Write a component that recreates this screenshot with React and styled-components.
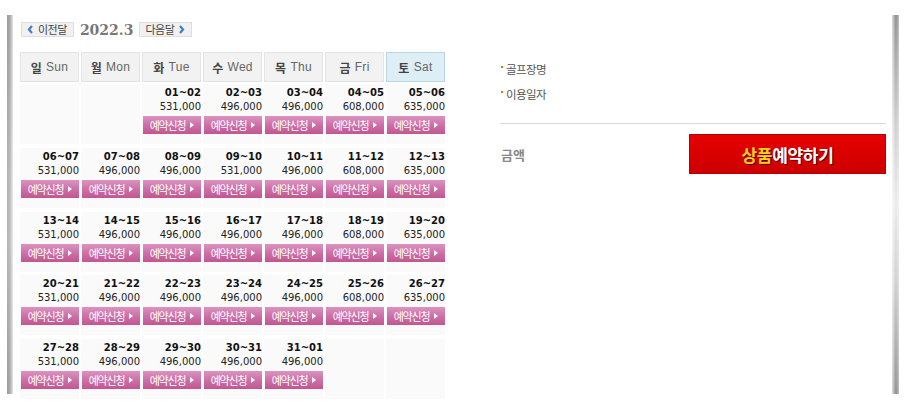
import React from 'react'
import styled, { createGlobalStyle } from 'styled-components'

const GlobalStyle = createGlobalStyle`
  html, body { margin: 0; padding: 0; background: #fff; }
  body { font-family: "DejaVu Sans", "Noto Sans CJK KR", sans-serif; }
`

const weeks = [
  [null, null, ['01~02', '531,000'], ['02~03', '496,000'], ['03~04', '496,000'], ['04~05', '608,000'], ['05~06', '635,000']],
  [['06~07', '531,000'], ['07~08', '496,000'], ['08~09', '496,000'], ['09~10', '531,000'], ['10~11', '496,000'], ['11~12', '608,000'], ['12~13', '635,000']],
  [['13~14', '531,000'], ['14~15', '496,000'], ['15~16', '496,000'], ['16~17', '496,000'], ['17~18', '496,000'], ['18~19', '608,000'], ['19~20', '635,000']],
  [['20~21', '531,000'], ['21~22', '496,000'], ['22~23', '496,000'], ['23~24', '496,000'], ['24~25', '496,000'], ['25~26', '608,000'], ['26~27', '635,000']],
  [['27~28', '531,000'], ['28~29', '496,000'], ['29~30', '496,000'], ['30~31', '496,000'], ['31~01', '496,000'], null, null],
]

const days = [['일', 'Sun'], ['월', 'Mon'], ['화', 'Tue'], ['수', 'Wed'], ['목', 'Thu'], ['금', 'Fri'], ['토', 'Sat']]

function Chevron({ dir }) {
  return (
    <svg width="7" height="9" viewBox="0 0 7 9">
      <polyline
        points={dir === 'left' ? '5,1 2,4.5 5,8' : '2,1 5,4.5 2,8'}
        fill="none" stroke="#3f7fc4" strokeWidth="2.2" />
    </svg>
  )
}

export default function App() {
  return (
    <Page>
      <GlobalStyle />
      <Frame>
        <Calendar>
          <MonthNav>
            <NavBtn><Chevron dir="left" />이전달</NavBtn>
            <Month>2022.3</Month>
            <NavBtn>다음달<Chevron dir="right" /></NavBtn>
          </MonthNav>
          <WeekHead>
            {days.map(([ko, en], i) => (
              <HeadCell key={en} $sat={i === 6}><b>{ko}</b> {en}</HeadCell>
            ))}
          </WeekHead>
          <Days>
            {weeks.flat().map((d, i) => (
              <DayCell key={i}>
                {d && <>
                  <DateText>{d[0]}</DateText>
                  <Price>{d[1]}</Price>
                  <ReserveBtn>예약신청</ReserveBtn>
                </>}
              </DayCell>
            ))}
          </Days>
        </Calendar>
        <Side>
          <InfoItem>골프장명</InfoItem>
          <InfoItem>이용일자</InfoItem>
          <Divider />
          <TotalRow>
            <TotalLabel>금액</TotalLabel>
            <BookBtn><em>상품</em>예약하기</BookBtn>
          </TotalRow>
        </Side>
      </Frame>
    </Page>
  )
}

const Page = styled.div`
  padding: 15px 0 0 13px;
  width: 906px;
  height: 410px;
  box-sizing: border-box;
`

const Frame = styled.div`
  position: relative;
  width: 879px;
  height: 379px;
  box-sizing: border-box;
  padding: 7px 6px 0 7px;
  display: flex;
  background: #fff;

  &::before, &::after {
    content: '';
    position: absolute;
    top: 0;
    bottom: 0;
  }
  &::before {
    left: -6px;
    width: 6px;
    background:
      linear-gradient(to right, rgba(255,255,255,0) 0%, rgba(255,255,255,0.15) 50%, rgba(255,255,255,0.75) 100%),
      linear-gradient(to bottom, #9a9a9a 0%, #b0b0b0 40%, #b4b4b4 60%, #9a9a9a 100%);
  }
  &::after {
    right: -7px;
    width: 7px;
    background:
      linear-gradient(to right, rgba(255,255,255,0.7) 0%, rgba(255,255,255,0) 55%, rgba(255,255,255,0.4) 100%),
      linear-gradient(to bottom, #8e8e8e 0%, #cfcfcf 30%, #ebebeb 50%, #cfcfcf 70%, #8e8e8e 100%);
  }
`

const Calendar = styled.div`
  width: 425px;
  display: flex;
  flex-direction: column;

  & > * {
    flex-shrink: 0;
  }
`

const MonthNav = styled.div`
  display: flex;
  align-items: center;
  gap: 6px;
  height: 15px;
  margin-left: 1px;
`

const NavBtn = styled.span`
  display: inline-flex;
  align-items: center;
  gap: 4px;
  height: 15px;
  padding: 0 6px 0 5px;
  box-sizing: border-box;
  background: #f1f1f1;
  border: 1px solid #dedede;
  font-family: "Noto Sans CJK KR", sans-serif;
  font-size: 11px;
  letter-spacing: -0.5px;
  color: #444;
  line-height: 1;
`

const Month = styled.span`
  font-family: "DejaVu Serif", serif;
  font-weight: bold;
  font-size: 14px;
  color: #777;
  padding-top: 1px;
`

const WeekHead = styled.div`
  margin-top: 15px;
  display: grid;
  grid-template-columns: repeat(7, 59px);
  height: 30px;
  column-gap: 2px;
`

const Days = styled.div`
  margin-top: 2px;
  display: grid;
  grid-template-columns: repeat(7, 59px);
  grid-auto-rows: 60px;
  column-gap: 2px;
  row-gap: 3.75px;
`

const HeadCell = styled.div`
  display: flex;
  align-items: center;
  justify-content: center;
  gap: 4px;
  background: ${p => (p.$sat ? '#ddeff4' : '#f2f2f2')};
  border: 1px solid ${p => (p.$sat ? '#b8d6e6' : '#e4e4e4')};
  box-sizing: border-box;
  font-family: "Liberation Sans", "Noto Sans CJK KR", sans-serif;
  font-size: 12px;
  color: #666;
  letter-spacing: 0.3px;

  b {
    font-family: "Noto Sans CJK KR", sans-serif;
    font-size: 12px;
    color: #444;
    font-weight: bold;
  }
`

const DayCell = styled.div`
  background: #fafafa;
  display: flex;
  flex-direction: column;
  align-items: stretch;
  padding: 2px 0 0 1px;
  box-sizing: border-box;
`

const DateText = styled.div`
  text-align: right;
  font-weight: bold;
  font-size: 10px;
  line-height: 14px;
  color: #111;
`

const Price = styled.div`
  text-align: right;
  font-size: 10px;
  line-height: 14px;
  color: #222;
`

const ReserveBtn = styled.div`
  margin-top: 2px;
  height: 18px;
  display: flex;
  align-items: center;
  justify-content: center;
  gap: 2px;
  background: linear-gradient(to bottom, #dc93bf 0%, #cd70a8 50%, #c2568f 100%);
  color: #fff;
  font-family: "Noto Sans CJK KR", sans-serif;
  font-size: 11px;
  letter-spacing: -1.2px;

  &::after {
    content: '';
    border-left: 4px solid #fff;
    border-top: 3.5px solid transparent;
    border-bottom: 3.5px solid transparent;
    margin-left: 3px;
  }
`

const Side = styled.div`
  margin-left: 55px;
  flex: 1;
  padding-top: 38px;
  display: flex;
  flex-direction: column;
`

const InfoItem = styled.div`
  position: relative;
  padding-left: 6px;
  height: 25px;
  line-height: 18px;
  font-family: "Noto Sans CJK KR", sans-serif;
  font-size: 11.5px;
  letter-spacing: -0.6px;
  color: #555;

  &::before {
    content: '';
    position: absolute;
    left: 1px;
    top: 6px;
    width: 2px;
    height: 2px;
    background: #f06a1d;
  }
`

const Divider = styled.div`
  margin-top: 13px;
  height: 1px;
  background: #d9d9d9;
`

const TotalRow = styled.div`
  margin-top: 10px;
  display: flex;
  align-items: center;
  justify-content: space-between;
`

const TotalLabel = styled.span`
  margin-left: 1px;
  font-family: "Noto Sans CJK KR", sans-serif;
  font-weight: bold;
  font-size: 13px;
  color: #888;
`

const BookBtn = styled.div`
  width: 197px;
  height: 40px;
  box-sizing: border-box;
  display: flex;
  align-items: center;
  justify-content: center;
  background: linear-gradient(to bottom, #e60000 0%, #cc0000 100%);
  border: 1px solid #b80000;
  font-family: "Noto Sans CJK KR", sans-serif;
  font-weight: bold;
  font-size: 17px;
  color: #fff;
  text-shadow: 1px 1px 0 #5a0000;
  letter-spacing: -0.3px;

  em {
    font-style: normal;
    color: #ffd21a;
  }
`
